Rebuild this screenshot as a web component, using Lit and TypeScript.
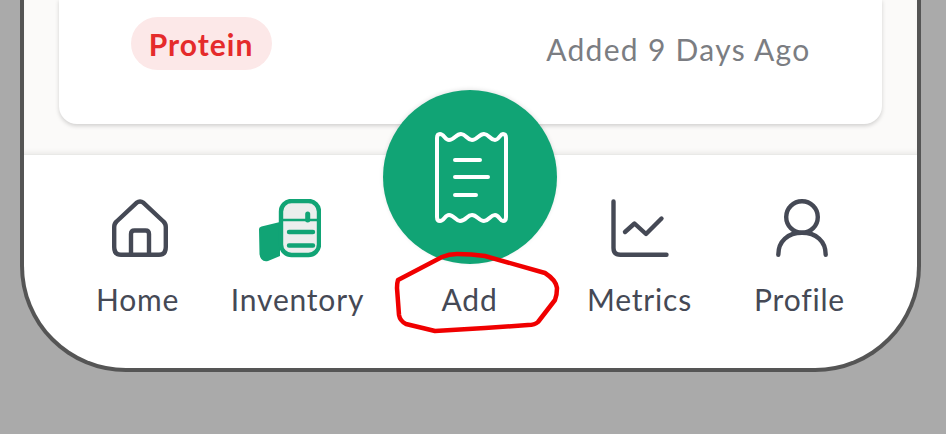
import { LitElement, html, css, svg, unsafeCSS } from "lit";
import { customElement } from "lit/decorators.js";

const ink = "#454955";
const green = "#11a475";

const homeIcon = html`<svg class="ico home" width="56" height="58" viewBox="0 0 56 58" fill="none" stroke="${ink}" stroke-width="4.4" stroke-linejoin="round">
  <path d="M4.600 22.500 L24.500 3.800 Q28 1.200 31.500 3.800 L51.400 22.500 Q53.800 24.600 53.800 28 V48 Q53.800 55.800 47 55.800 H9 Q2.200 55.800 2.200 48 V28 Q2.200 24.600 4.600 22.500 Z"/>
  <path d="M19 55 V35 Q19 31.500 22.500 31.500 H33.500 Q37 31.500 37 35 V55"/>
</svg>`;

const inventoryIcon = html`<svg class="ico inv" width="62" height="63" viewBox="0 0 62 63">
  <path d="M0 30 Q0 28 2.500 27.500 L21 23 V57 L9 62 Q1.500 63.500 0.500 55 Z" fill="${green}"/>
  <rect x="22" y="2" width="38" height="54" rx="10.500" fill="#eceeed" stroke="${green}" stroke-width="4.400"/>
  <path d="M22 21 H60" stroke="${green}" stroke-width="2.500"/>
  <path d="M48.700 15 V21" stroke="${green}" stroke-width="5" stroke-linecap="round"/>
  <path d="M30 33 H54 M30 46.500 H54" stroke="${green}" stroke-width="4.400" stroke-linecap="round"/>
</svg>`;

const receiptIcon = html`<svg class="rcpt" width="73" height="91" viewBox="0 0 73 91" fill="none" stroke="#fff" stroke-width="4" stroke-linecap="round" stroke-linejoin="round">
  <path d="M2 6 Q2 2 5 2 C9 2 10 8 14 8 C19 8 21 2 26 2 C31 2 32 8 37 8 C42 8 44 2 49 2 C54 2 55 8 60 8 C64 8 65 2 68 2 Q71 2 71 6 V85 Q71 89 68 89 C65 89 64 83 60 83 C55 83 54 89 49 89 C44 89 42 83 37 83 C32 83 31 89 25 89 C21 89 19 83 14 83 C10 83 9 89 5 89 Q2 89 2 85 Z"/>
  <path d="M20 28 H45 M20 45 H53 M20 63 H41"/>
</svg>`;

const metricsIcon = html`<svg class="ico met" width="58" height="58" viewBox="0 0 58 58" fill="none" stroke="${ink}" stroke-width="4.400" stroke-linecap="round" stroke-linejoin="round">
  <path d="M2.500 2.500 V49 Q2.500 55.800 9.500 55.800 H55.500"/>
  <path d="M14 33 L23.500 24.500 L35 35 L50.500 19.500"/>
</svg>`;

const profileIcon = html`<svg class="ico prof" width="52" height="58" viewBox="0 0 52 58" fill="none" stroke="${ink}" stroke-width="4.400" stroke-linecap="round">
  <circle cx="26" cy="18" r="15.800"/>
  <path d="M2.300 55.800 C2.300 42 12 33.800 26 33.800 C40 33.800 49.700 42 49.700 55.800"/>
</svg>`;

const scribble = svg`<path d="M398 280 L442 257 Q449 254 457 254 Q472 254 485 256 L545 273 Q556 280 557 288 Q557 295 555 300 L538 322 Q535 325 528 325 L485 328 L435 331 L406 324 Q400 321 399 315 L397 288 Q397 283 398 280 Z" fill="none" stroke="#f00000" stroke-width="4.500" stroke-linejoin="round"/>`;

@customElement("app-root")
export class AppRoot extends LitElement {
  static styles = css`
    :host {
      display: block;
      position: relative;
      width: 946px;
      height: 434px;
      background: #aaaaaa;
      overflow: hidden;
      font-family: "Lato", "Noto Sans", sans-serif;
    }
    .phone {
      box-sizing: border-box;
      margin-left: 19.5px;
      width: 901.5px;
      height: 372px;
      border: solid #555555;
      border-width: 0 4.5px 4.5px 4.5px;
      border-radius: 0 0 106px 106px;
      overflow: hidden;
      display: flex;
      flex-direction: column;
      background: #fff;
    }
    .content {
      flex: 0 0 155px;
      box-sizing: border-box;
      background: #fbfaf9;
      padding: 0 35.5px 0 35px;
      border-bottom: 1px solid #e9e9e7;
      box-shadow: inset 0 -4px 4px -2px #ecebe9;
    }
    .card {
      box-sizing: border-box;
      height: 124px;
      background: #fff;
      border-radius: 0 0 18px 18px;
      box-shadow: 0 1.5px 4px rgba(0, 0, 0, 0.17);
      display: flex;
      justify-content: space-between;
      align-items: flex-start;
      padding: 17px 71px 0 72px;
      position: relative;
    }
    .chip {
      height: 53px;
      width: 141px;
      border-radius: 27px;
      background: #fce8e8;
      color: #e52b2b;
      font-weight: 700;
      font-size: 30px;
      letter-spacing: 1px;
      display: flex;
      align-items: center;
      justify-content: center;
    }
    .added {
      color: #7b7d82;
      font-size: 30px;
      letter-spacing: 1.3px;
      line-height: 64px;
    }
    .nav {
      flex: 1;
      display: grid;
      grid-template-columns: 160px 160px 184px 156px 164px;
      padding-left: 34px;
      color: ${unsafeCSS(ink)};
    }
    .item {
      display: flex;
      flex-direction: column;
      align-items: center;
      font-size: 30px;
      letter-spacing: 0.8px;
      line-height: 40px;
      padding-top: 40px;
    }
    .icon-slot {
      height: 66px;
      display: flex;
      align-items: center;
      justify-content: center;
      margin-bottom: 18px;
    }
    .home {
      margin-left: 5px;
    }
    .inv {
      margin: 4px 0 0 -15px;
    }
    .met {
      margin-left: 1px;
    }
    .prof {
      margin-left: 5px;
    }
    .item.add {
      padding-top: 0;
    }
    .fab {
      position: relative;
      margin-top: -65px;
      width: 174px;
      height: 174px;
      flex: none;
      border-radius: 50%;
      background: ${unsafeCSS(green)};
      display: flex;
      align-items: center;
      justify-content: center;
      box-shadow: 0 -1px 4px rgba(0, 0, 0, 0.1);
    }
    .rcpt {
      margin-left: 3px;
    }
    .item.add .label {
      margin-top: 15px;
    }
    .mark {
      position: absolute;
      inset: 0;
      width: 946px;
      height: 434px;
      pointer-events: none;
    }
  `;

  render() {
    return html`
      <div class="phone">
        <div class="content">
          <div class="card">
            <span class="chip">Protein</span>
            <span class="added">Added 9 Days Ago</span>
          </div>
        </div>
        <nav class="nav">
          <div class="item"><div class="icon-slot">${homeIcon}</div><span class="label">Home</span></div>
          <div class="item"><div class="icon-slot">${inventoryIcon}</div><span class="label">Inventory</span></div>
          <div class="item add"><div class="fab">${receiptIcon}</div><span class="label">Add</span></div>
          <div class="item"><div class="icon-slot">${metricsIcon}</div><span class="label">Metrics</span></div>
          <div class="item"><div class="icon-slot">${profileIcon}</div><span class="label">Profile</span></div>
        </nav>
      </div>
      <svg class="mark" viewBox="0 0 946 434">${scribble}</svg>
    `;
  }
}
